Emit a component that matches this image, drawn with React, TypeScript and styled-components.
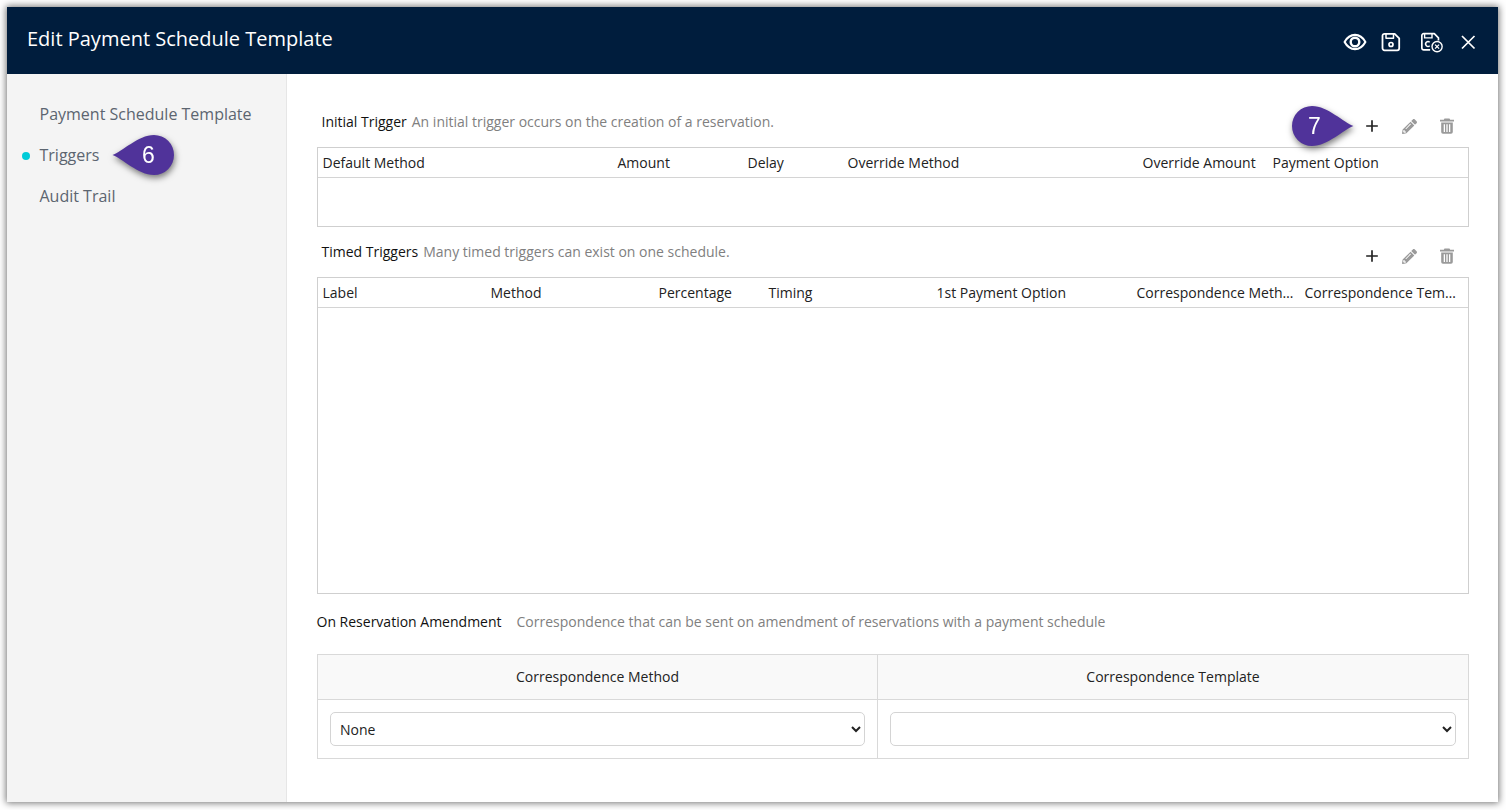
import styled, { createGlobalStyle } from 'styled-components';
import { MdAdd } from 'react-icons/md';
import { FaPencilAlt } from 'react-icons/fa';

const GlobalStyle = createGlobalStyle`
  html, body {
    margin: 0;
    padding: 0;
    background: #fff;
    font-family: "Open Sans", "Noto Sans", sans-serif;
  }
`;

const Page = styled.div`
  width: 1506px;
  height: 810px;
  padding: 7px 8px 8px 7px;
  box-sizing: border-box;
  overflow: hidden;
`;

const Dialog = styled.div`
  height: 100%;
  display: flex;
  flex-direction: column;
  background: #fff;
  box-shadow: 0 0 7px 1px rgba(0, 0, 0, 0.55);
`;

const Header = styled.header`
  height: 67px;
  flex: none;
  display: flex;
  align-items: center;
  justify-content: space-between;
  padding: 0 18px 0 20px;
  background: #001d3d;
  color: #fff;
`;

const Title = styled.h1`
  margin: 0 0 4px;
  font-size: 20px;
  font-weight: 400;
`;

const HeaderIcons = styled.div`
  display: flex;
  align-items: center;
  gap: 12px;
  margin-top: 3px;
`;

const HeaderIcon = styled.span<{ $wide?: boolean }>`
  display: flex;
  align-items: center;
  justify-content: center;
  width: 24px;
  height: 24px;
  margin-left: ${(p) => (p.$wide ? 5 : 0)}px;
  color: #fff;
`;

const Body = styled.div`
  flex: 1;
  display: flex;
  min-height: 0;
`;

const Sidebar = styled.nav`
  width: 280px;
  flex: none;
  box-sizing: border-box;
  padding: 20px 0 0 32.5px;
  background: #f4f4f4;
  border-right: 1px solid #e6e6e6;
`;

const NavItem = styled.div<{ $active?: boolean }>`
  position: relative;
  height: 41px;
  line-height: 41px;
  font-size: 16px;
  color: #5c6570;

  &::before {
    content: '';
    display: ${(p) => (p.$active ? 'block' : 'none')};
    position: absolute;
    left: -18px;
    top: 17px;
    width: 8px;
    height: 8px;
    border-radius: 50%;
    background: #00cbd8;
  }
`;

const Main = styled.main`
  flex: 1;
  min-width: 0;
  padding: 30px 29px 0 30px;
  display: flex;
  flex-direction: column;
`;

const SectionHead = styled.div`
  position: relative;
  height: 43px;
  flex: none;
  display: flex;
  justify-content: space-between;
  padding: 9px 0 0 4.5px;
  box-sizing: border-box;
  font-size: 14px;
  line-height: 18px;
`;

const SectionText = styled.div`
  display: flex;
  gap: 5px;
`;

const Label = styled.span`
  color: #111;
`;

const Hint = styled.span`
  color: #808080;
`;

const Tools = styled.div`
  display: flex;
  gap: 13.5px;
  margin: 1px 10.5px 0 0;
`;

const ToolIcon = styled.span<{ $muted?: boolean }>`
  display: flex;
  align-items: center;
  justify-content: center;
  width: 24px;
  height: 24px;
  color: ${(p) => (p.$muted ? '#9a9a9a' : '#222')};
`;

const GridTable = styled.div<{ $height: number }>`
  height: ${(p) => p.$height}px;
  flex: none;
  box-sizing: border-box;
  border: 1px solid #cfcfcf;
`;

const GridHead = styled.div<{ $columns: string }>`
  height: 29px;
  display: grid;
  grid-template-columns: ${(p) => p.$columns};
  border-bottom: 1px solid #d4d4d4;
`;

const GridHeadCell = styled.div`
  padding: 0 5px 0 4.5px;
  font-size: 14px;
  font-weight: 500;
  line-height: 30px;
  color: #222;
  white-space: nowrap;
  overflow: hidden;
  text-overflow: ellipsis;
`;

const TimedHead = styled(SectionHead)`
  margin-top: 7px;
`;

const AmendmentHead = styled.div`
  margin: 18px 0 0 -0.5px;
  height: 42px;
  flex: none;
  display: flex;
  gap: 15px;
  font-size: 14px;
  line-height: 20px;
`;

const AmendmentTable = styled.div`
  display: grid;
  grid-template-columns: 560px 1fr;
  grid-template-rows: 45px 1fr;
  border: 1px solid #d9d9d9;
  height: 105px;
  flex: none;
  box-sizing: border-box;
`;

const AmendmentTitle = styled.div<{ $last?: boolean }>`
  line-height: 44px;
  text-align: center;
  font-size: 14px;
  font-weight: 500;
  color: #222;
  background: #f9f9f9;
  border-bottom: 1px solid #d9d9d9;
  border-right: ${(p) => (p.$last ? 'none' : '1px solid #d9d9d9')};
`;

const AmendmentCell = styled.div<{ $last?: boolean }>`
  display: flex;
  align-items: center;
  padding: 0 12px;
  border-right: ${(p) => (p.$last ? 'none' : '1px solid #d9d9d9')};
`;

const Select = styled.select`
  width: 100%;
  height: 34px;
  padding: 0 5px;
  font-family: inherit;
  font-size: 14px;
  color: #222;
  background: #fff;
  border: 1px solid #d4d4d4;
  border-radius: 5px;
  outline: none;
`;

const Callout = styled.div<{ $left: number; $top: number; $flip?: boolean }>`
  position: absolute;
  left: ${(p) => p.$left}px;
  top: ${(p) => p.$top}px;
  width: 64px;
  height: 42px;
  z-index: 2;
  filter: drop-shadow(1px 3px 3px rgba(0, 0, 0, 0.5));

  svg {
    display: block;
    transform: ${(p) => (p.$flip ? 'scaleX(-1)' : 'none')};
  }
`;

const CalloutNumber = styled.span<{ $flip?: boolean }>`
  position: absolute;
  top: 0;
  ${(p) => (p.$flip ? 'left: 0;' : 'right: 3px;')}
  width: ${(p) => (p.$flip ? 50 : 48)}px;
  line-height: 42px;
  text-align: center;
  font-family: "Liberation Sans", Arial, sans-serif;
  font-size: 23px;
  color: #fff;
`;

function CalloutShape() {
  return (
    <svg width="64" height="42" viewBox="0 0 64 42">
      <path d="M0.5 21 C10 18 26 1 42 1 A20 20 0 0 1 42 41 C26 41 10 24 0.5 21 Z" fill="#50339a" />
    </svg>
  );
}

function EyeIcon() {
  return (
    <svg width="24" height="24" viewBox="0 0 24 24" fill="none" stroke="#fff" strokeWidth="2.1">
      <path d="M1.6 12C4 7.6 7.6 4.9 12 4.9s8 2.7 10.4 7.1c-2.4 4.4-6 7.1-10.4 7.1S4 16.4 1.6 12z" strokeLinejoin="round" />
      <circle cx="12" cy="12" r="4.3" strokeWidth="2.4" />
    </svg>
  );
}

function SaveIcon() {
  return (
    <svg width="22" height="22" viewBox="0 0 22 22" fill="none" stroke="#fff" strokeWidth="1.8" strokeLinejoin="round">
      <path d="M4.5 2.8h10.2l4.5 4.5v10a2 2 0 0 1-2 2H4.5a2 2 0 0 1-2-2V4.800a2 2 0 0 1 2-2z" />
      <path d="M6 3v4.200h7.500V3" strokeWidth="1.5" />
      <circle cx="11" cy="13.5" r="2" strokeWidth="1.7" />
    </svg>
  );
}

function SaveCancelIcon() {
  return (
    <svg width="26" height="24" viewBox="0 0 26 24" fill="none" stroke="#fff" strokeWidth="1.8">
      <path d="M11 20.5H4a2 2 0 0 1-2-2V5a2 2 0 0 1 2-2h11.5l4.5 4.5v3" strokeLinejoin="round" />
      <path d="M5 3v4.500h8V3" strokeWidth="1.5" />
      <path d="M10.5 12.300a2.600 2.600 0 1 0 0 3.800" strokeWidth="1.6" />
      <circle cx="18.5" cy="17" r="5.5" strokeWidth="1.5" />
      <path d="M16.300 14.800l4.400 4.400M20.700 14.800l-4.400 4.400" strokeWidth="1.4" />
    </svg>
  );
}

function CloseIcon() {
  return (
    <svg width="20" height="20" viewBox="0 0 20 20" stroke="#fff" strokeWidth="1.7" fill="none">
      <path d="M4 4l12.5 12.5M16.5 4L4 16.5" />
    </svg>
  );
}

function TrashIcon() {
  return (
    <svg width="20" height="20" viewBox="0 0 20 20">
      <path
        fillRule="evenodd"
        fill="#9a9a9a"
        d="M7.5 2.5h5l.7 1.300H17v1.700H3V3.800h3.800zM4.200 6.500h11.600V16a1.800 1.800 0 0 1-1.800 1.800H6A1.800 1.800 0 0 1 4.200 16zM6.700 8.200v7.800h1.300V8.200zM9.350 8.200v7.800h1.300V8.200zM12 8.200v7.800h1.300V8.200z"
      />
    </svg>
  );
}

function RowTools() {
  return (
    <Tools>
      <ToolIcon>
        <MdAdd size={20} />
      </ToolIcon>
      <ToolIcon $muted>
        <FaPencilAlt size={15} />
      </ToolIcon>
      <ToolIcon $muted>
        <TrashIcon />
      </ToolIcon>
    </Tools>
  );
}

const initialColumns = ['Default Method', 'Amount', 'Delay', 'Override Method', 'Override Amount', 'Payment Option'];
const timedColumns = ['Label', 'Method', 'Percentage', 'Timing', '1st Payment Option', 'Correspondence Method', 'Correspondence Template'];

export default function App() {
  return (
    <Page>
      <GlobalStyle />
      <Dialog>
        <Header>
          <Title>Edit Payment Schedule Template</Title>
          <HeaderIcons>
            <HeaderIcon>
              <EyeIcon />
            </HeaderIcon>
            <HeaderIcon>
              <SaveIcon />
            </HeaderIcon>
            <HeaderIcon $wide>
              <SaveCancelIcon />
            </HeaderIcon>
            <HeaderIcon>
              <CloseIcon />
            </HeaderIcon>
          </HeaderIcons>
        </Header>
        <Body>
          <Sidebar>
            <NavItem>Payment Schedule Template</NavItem>
            <NavItem $active>
              Triggers
              <Callout $left={72} $top={-1}>
                <CalloutShape />
                <CalloutNumber>6</CalloutNumber>
              </Callout>
            </NavItem>
            <NavItem>Audit Trail</NavItem>
          </Sidebar>
          <Main>
            <SectionHead>
              <SectionText>
                <Label>Initial Trigger</Label>
                <Hint>An initial trigger occurs on the creation of a reservation.</Hint>
              </SectionText>
              <RowTools />
              <Callout $left={972.5} $top={1} $flip>
                <CalloutShape />
                <CalloutNumber $flip>7</CalloutNumber>
              </Callout>
            </SectionHead>
            <GridTable $height={80}>
              <GridHead $columns="295px 130px 100px 295px 130px 1fr">
                {initialColumns.map((name) => (
                  <GridHeadCell key={name}>{name}</GridHeadCell>
                ))}
              </GridHead>
            </GridTable>
            <TimedHead>
              <SectionText>
                <Label>Timed Triggers</Label>
                <Hint>Many timed triggers can exist on one schedule.</Hint>
              </SectionText>
              <RowTools />
            </TimedHead>
            <GridTable $height={317}>
              <GridHead $columns="168px 168px 110px 168px 200px 168px 1fr">
                {timedColumns.map((name) => (
                  <GridHeadCell key={name}>{name}</GridHeadCell>
                ))}
              </GridHead>
            </GridTable>
            <AmendmentHead>
              <Label>On Reservation Amendment</Label>
              <Hint>Correspondence that can be sent on amendment of reservations with a payment schedule</Hint>
            </AmendmentHead>
            <AmendmentTable>
              <AmendmentTitle>Correspondence Method</AmendmentTitle>
              <AmendmentTitle $last>Correspondence Template</AmendmentTitle>
              <AmendmentCell>
                <Select defaultValue="None">
                  <option>None</option>
                </Select>
              </AmendmentCell>
              <AmendmentCell $last>
                <Select defaultValue="">
                  <option value=""></option>
                </Select>
              </AmendmentCell>
            </AmendmentTable>
          </Main>
        </Body>
      </Dialog>
    </Page>
  );
}
